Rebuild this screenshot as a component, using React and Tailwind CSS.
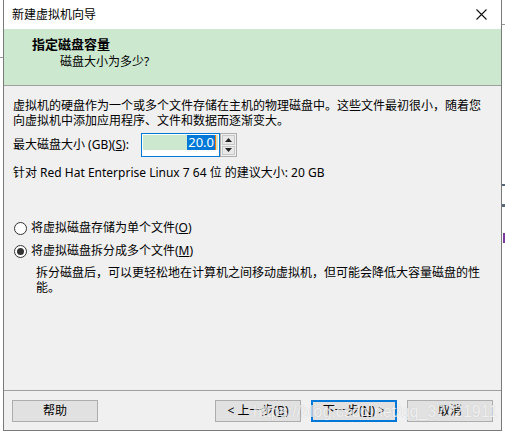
import React from "react";

function Radio({ checked }) {
  return (
    <span className="w-[13px] h-[13px] rounded-full border border-[#333] bg-white flex items-center justify-center shrink-0">
      {checked && <span className="w-[7px] h-[7px] rounded-full bg-[#333]" />}
    </span>
  );
}

function Btn({ children, primary }) {
  return (
    <div
      className={
        "w-[86px] h-[22px] flex items-center justify-center bg-[#e1e1e1] text-[12px] text-black " +
        (primary ? "border-2 border-[#0078d7]" : "border border-[#adadad]")
      }
    >
      {children}
    </div>
  );
}

export default function App() {
  return (
    <div
      className="w-[505px] h-[436px] bg-white relative overflow-hidden"
      style={{ fontFamily: '"Noto Sans", "Noto Sans CJK SC", "Liberation Sans", sans-serif' }}
    >
      {/* background bits */}
      <div className="absolute left-0 top-[57px] w-[3px] h-px bg-[#999]" />
      <div className="absolute left-[502px] top-[24px] w-[3px] h-px bg-[#999]" />
      <div className="absolute left-[502px] top-[184px] w-[3px] h-[2px] bg-[#5a6a7a]" />
      <div className="absolute left-[502px] top-[204px] w-[3px] h-[3px] bg-[#5a6a7a]" />
      <div className="absolute left-[503px] top-[233px] w-[2px] h-[10px] bg-[#7a3aa0]" />

      <div className="ml-[3px] w-[499px] h-[431px] border-l border-r border-b border-[#7a7a7a] flex flex-col">
        {/* title bar */}
        <div className="h-[29px] bg-white flex items-center pl-[8px] pr-[10px] text-[12px] text-black">
          <span className="flex-1 pt-px">新建虚拟机向导</span>
          <svg width="11" height="11" viewBox="0 0 11 11" className="mr-[4px]">
            <path d="M0.5 0.5 L10.5 10.5 M10.5 0.5 L0.5 10.5" stroke="#111" strokeWidth="1.1" />
          </svg>
        </div>
        {/* header */}
        <div className="h-[57px] bg-[#cce8cf] border-b border-[#a0a0a0] pl-[28px] pt-[6px] text-black">
          <div className="text-[13px] font-bold leading-[18px]">指定磁盘容量</div>
          <div className="text-[12px] leading-[18px] pl-[28px]">磁盘大小为多少?</div>
        </div>
        {/* body */}
        <div className="flex-1 bg-[#f0f0f0] flex flex-col text-[12px] text-black">
          <div className="pl-[9px] pt-[12px] leading-[15px]">
            <div className="whitespace-nowrap">虚拟机的硬盘作为一个或多个文件存储在主机的物理磁盘中。这些文件最初很小，随着您</div>
            <div className="whitespace-nowrap">向虚拟机中添加应用程序、文件和数据而逐渐变大。</div>
          </div>
          <div className="pl-[9px] mt-[5px] flex items-center h-[24px]">
            <span className="w-[128px]">
              最大磁盘大小 (GB)(<span className="underline">S</span>):
            </span>
            <div className="w-[79px] h-[24px] border border-[#0078d7] bg-white p-px">
              <div className="h-[15px] bg-[#cce8cf] flex justify-end items-center pr-[2px]">
                <span className="bg-[#0078d7] text-white h-[15px] leading-[15px] text-[13px] px-px">20.0</span>
                <span className="w-px h-[15px] bg-[#ff7a00]" />
              </div>
            </div>
            <div className="w-[17px] h-[24px] border border-[#adadad] bg-[#f0f0f0] flex flex-col p-px gap-px">
              <div className="flex-1 bg-[#e8e8e8] border border-[#c8c8c8] flex items-center justify-center">
                <svg width="7" height="4" viewBox="0 0 7 4"><path d="M3.5 0 L7 4 L0 4 Z" fill="#222" /></svg>
              </div>
              <div className="flex-1 bg-[#e8e8e8] border border-[#c8c8c8] flex items-center justify-center">
                <svg width="7" height="4" viewBox="0 0 7 4"><path d="M0 0 L7 0 L3.5 4 Z" fill="#222" /></svg>
              </div>
            </div>
          </div>
          <div className="pl-[9px] mt-[8px] leading-[15px]">针对 Red Hat Enterprise Linux 7 64 位 的建议大小: 20 GB</div>

          <div className="pl-[10px] mt-[40px] flex items-center gap-[4px] h-[16px]">
            <Radio />
            <span>
              将虚拟磁盘存储为单个文件(<span className="underline">O</span>)
            </span>
          </div>
          <div className="pl-[10px] mt-[7px] flex items-center gap-[4px] h-[16px]">
            <Radio checked />
            <span>
              将虚拟磁盘拆分成多个文件(<span className="underline">M</span>)
            </span>
          </div>
          <div className="pl-[32px] mt-[6px] leading-[15px]">
            <div className="whitespace-nowrap">拆分磁盘后，可以更轻松地在计算机之间移动虚拟机，但可能会降低大容量磁盘的性</div>
            <div>能。</div>
          </div>

          <div className="flex-1" />
          {/* footer */}
          <div className="border-t border-[#a0a0a0] h-[40px] pt-[9px] px-[8px] flex items-start relative">
            <Btn>帮助</Btn>
            <div className="flex-1" />
            <div className="flex gap-[10px]">
              <Btn>&lt; 上一步(<span className="underline">B</span>)</Btn>
              <Btn primary>下一步(<span className="underline">N</span>) &gt;</Btn>
              <Btn>取消</Btn>
            </div>
            <div
              className="absolute left-[249px] top-[11px] text-[16px] leading-[20px] text-[#f4f4f4] whitespace-nowrap opacity-80"
              style={{ fontFamily: '"Liberation Sans", sans-serif', textShadow: "0 0 1px #bbb" }}
            >
              https://blog.csdn.net/qq_37721911
            </div>
          </div>
        </div>
      </div>
    </div>
  );
}
